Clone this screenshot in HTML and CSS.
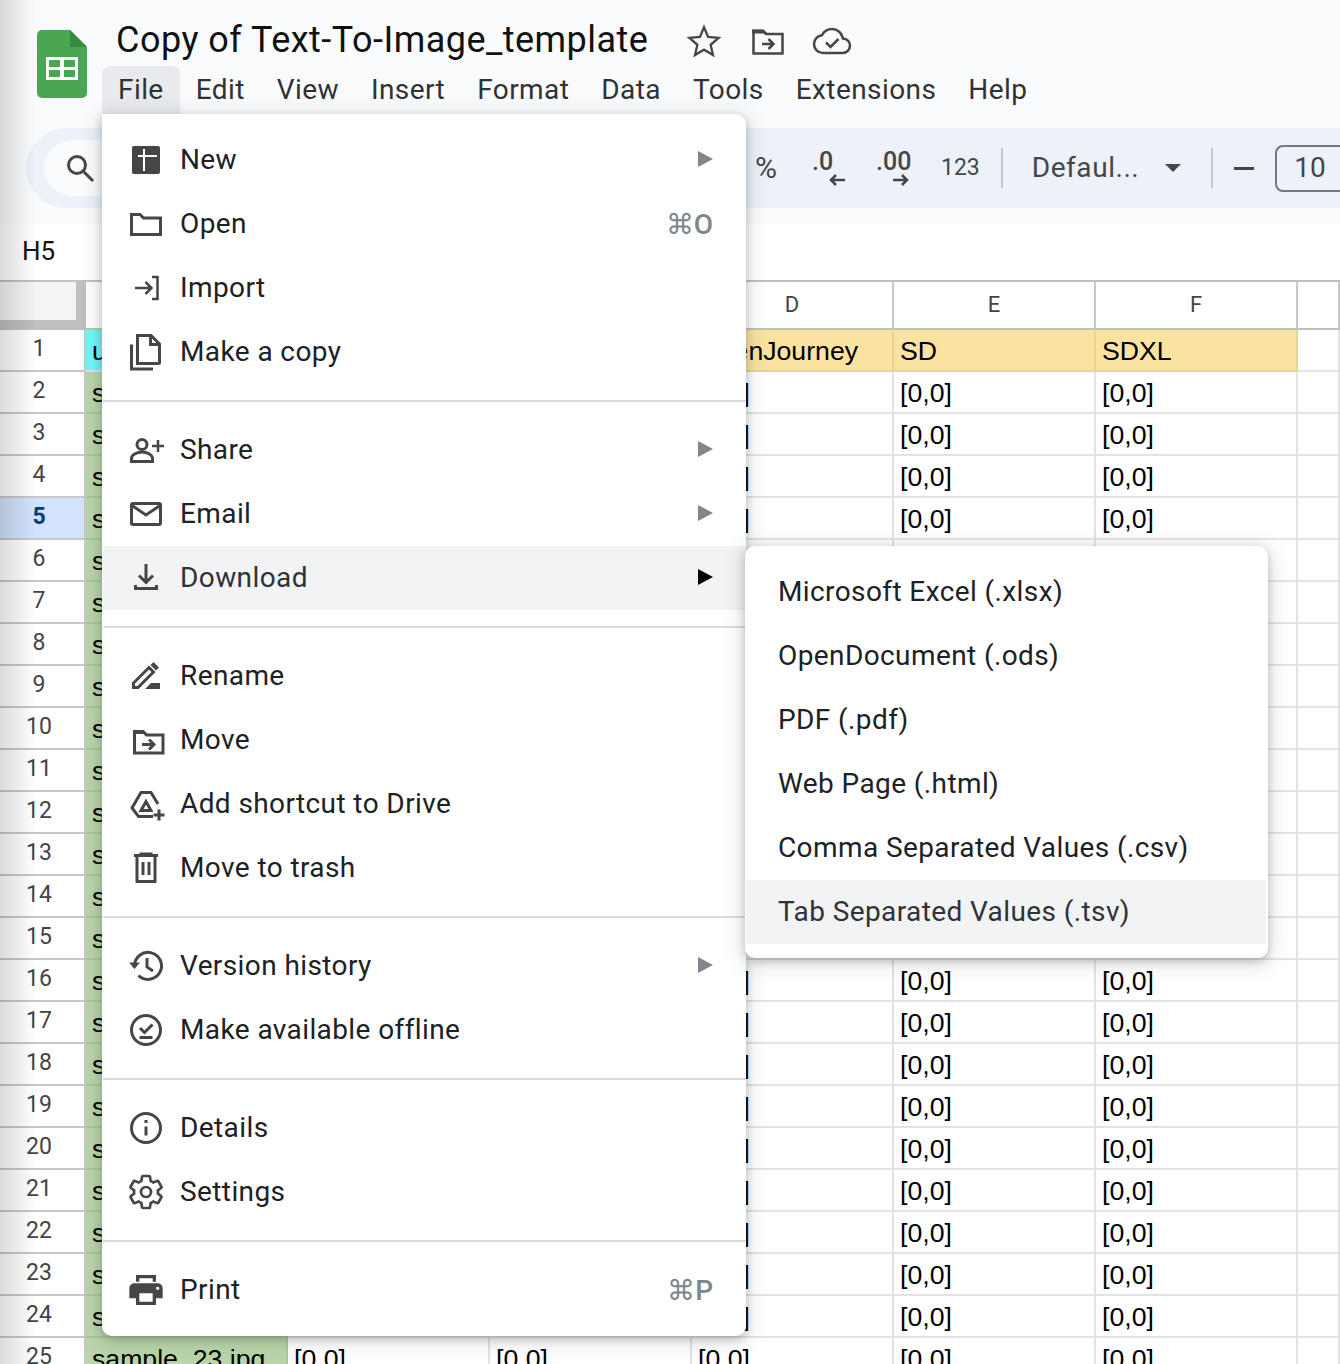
FILE: index.html
```html
<!DOCTYPE html>
<html lang="en">
<head>
    <meta charset="UTF-8">
    <meta name="viewport" content="width=device-width, initial-scale=1.0">
    <title>Copy of Text-To-Image_template</title>
    <link rel="stylesheet" href="styles.css">
</head>
<body>
    <header class="topbar">
        <svg class="logo" width="50" height="68" viewBox="0 0 50 68">
            <path d="M5 0H33L50 17V63a5 5 0 0 1-5 5H5a5 5 0 0 1-5-5V5a5 5 0 0 1 5-5z" fill="#4aa653"/>
            <path d="M33 0L50 17H33z" fill="#38883e"/>
            <path d="M9 27H41V50H9zM12 30V37H23V30zM27 30V37H38V30zM12 40V47H23V40zM27 40V47H38V40z" fill="#fff" fill-rule="evenodd"/>
        </svg>
        <div class="doc">
            <div class="title-row">
                <span class="doc-title">Copy of Text-To-Image_template</span>
                <svg class="title-icon" viewBox="0 0 40 40"><path transform="translate(1.600 1.600) scale(.92)" d="M20 5l4.400 10.600 11.500 1-8.700 7.500 2.600 11.200L20 29.400 10.200 35.300l2.600-11.200-8.700-7.500 11.500-1z"/></svg>
                <svg class="title-icon" viewBox="0 0 40 40"><path d="M5.500 10h9.500l3 3h16.500v19.500H5.500z"/><path class="solid" d="M4 8.500h11.500l4 4H4z"/><path d="M14 23h11M20.500 18l5 5-5 5"/></svg>
                <svg class="title-icon" viewBox="0 0 40 40"><path d="M31 17.500C30 12 25.500 8 20 8c-4.400 0-8.100 2.500-10 6.200C5.500 14.700 2 18.400 2 23c0 5 4 9 9 9h19.500c4.200 0 7.500-3.300 7.500-7.500 0-3.900-3.100-6.800-7-7z"/><path d="M14 21.500l4.500 4.500 8-8"/></svg>
            </div>
            <nav class="menubar">
                <a class="open">File</a>
                <a>Edit</a>
                <a>View</a>
                <a>Insert</a>
                <a>Format</a>
                <a>Data</a>
                <a>Tools</a>
                <a>Extensions</a>
                <a>Help</a>
            </nav>
        </div>
    </header>

    <div class="toolbar-wrap">
        <div class="toolbar">
            <div class="search">
                <svg width="32" height="32" viewBox="0 0 32 32"><circle cx="13" cy="13" r="8.500"/><path d="M19.500 19.500L29 29"/></svg>
            </div>
            <span class="tool percent">%</span>
            <span class="tool decimal dec-less">.0
                <svg width="18" height="12" viewBox="0 0 18 12"><path d="M17 6H3M8 1L3 6l5 5"/></svg>
            </span>
            <span class="tool decimal dec-more">.00
                <svg width="18" height="12" viewBox="0 0 18 12"><path d="M1 6h14M10 1l5 5-5 5"/></svg>
            </span>
            <span class="tool numfmt">123</span>
            <span class="tool-sep"></span>
            <span class="tool fontname">Defaul...</span>
            <span class="caret"></span>
            <span class="tool-sep sep-b"></span>
            <span class="minus"></span>
            <span class="fontsize">10</span>
        </div>
    </div>

    <div class="formula-bar">H5</div>

    <table class="grid">
        <colgroup>
            <col class="col-head"><col class="col"><col class="col"><col class="col"><col class="col"><col class="col"><col class="col"><col class="col-g">
        </colgroup>
        <thead>
            <tr><th class="corner"></th><th></th><th></th><th></th><th>D</th><th>E</th><th>F</th><th></th></tr>
        </thead>
        <tbody>
            <tr class="first"><th>1</th><td class="cyan">u</td><td class="gold"></td><td class="gold"></td><td class="gold">OpenJourney</td><td class="gold">SD</td><td class="gold">SDXL</td><td></td></tr>
            <tr><th>2</th><td class="name">s</td><td></td><td></td><td>[0,0]</td><td>[0,0]</td><td>[0,0]</td><td></td></tr>
            <tr><th>3</th><td class="name">s</td><td></td><td></td><td>[0,0]</td><td>[0,0]</td><td>[0,0]</td><td></td></tr>
            <tr><th>4</th><td class="name">s</td><td></td><td></td><td>[0,0]</td><td>[0,0]</td><td>[0,0]</td><td></td></tr>
            <tr class="current"><th>5</th><td class="name">s</td><td></td><td></td><td>[0,0]</td><td>[0,0]</td><td>[0,0]</td><td></td></tr>
            <tr><th>6</th><td class="name">s</td><td></td><td></td><td></td><td></td><td></td><td></td></tr>
            <tr><th>7</th><td class="name">s</td><td></td><td></td><td></td><td></td><td></td><td></td></tr>
            <tr><th>8</th><td class="name">s</td><td></td><td></td><td></td><td></td><td></td><td></td></tr>
            <tr><th>9</th><td class="name">s</td><td></td><td></td><td></td><td></td><td></td><td></td></tr>
            <tr><th>10</th><td class="name">s</td><td></td><td></td><td></td><td></td><td></td><td></td></tr>
            <tr><th>11</th><td class="name">s</td><td></td><td></td><td></td><td></td><td></td><td></td></tr>
            <tr><th>12</th><td class="name">s</td><td></td><td></td><td></td><td></td><td></td><td></td></tr>
            <tr><th>13</th><td class="name">s</td><td></td><td></td><td></td><td></td><td></td><td></td></tr>
            <tr><th>14</th><td class="name">s</td><td></td><td></td><td></td><td></td><td></td><td></td></tr>
            <tr><th>15</th><td class="name">s</td><td></td><td></td><td></td><td></td><td></td><td></td></tr>
            <tr><th>16</th><td class="name">s</td><td></td><td></td><td>[0,0]</td><td>[0,0]</td><td>[0,0]</td><td></td></tr>
            <tr><th>17</th><td class="name">s</td><td></td><td></td><td>[0,0]</td><td>[0,0]</td><td>[0,0]</td><td></td></tr>
            <tr><th>18</th><td class="name">s</td><td></td><td></td><td>[0,0]</td><td>[0,0]</td><td>[0,0]</td><td></td></tr>
            <tr><th>19</th><td class="name">s</td><td></td><td></td><td>[0,0]</td><td>[0,0]</td><td>[0,0]</td><td></td></tr>
            <tr><th>20</th><td class="name">s</td><td></td><td></td><td>[0,0]</td><td>[0,0]</td><td>[0,0]</td><td></td></tr>
            <tr><th>21</th><td class="name">s</td><td></td><td></td><td>[0,0]</td><td>[0,0]</td><td>[0,0]</td><td></td></tr>
            <tr><th>22</th><td class="name">s</td><td></td><td></td><td>[0,0]</td><td>[0,0]</td><td>[0,0]</td><td></td></tr>
            <tr><th>23</th><td class="name">s</td><td></td><td></td><td>[0,0]</td><td>[0,0]</td><td>[0,0]</td><td></td></tr>
            <tr><th>24</th><td class="name">s</td><td></td><td></td><td>[0,0]</td><td>[0,0]</td><td>[0,0]</td><td></td></tr>
            <tr><th>25</th><td class="name">sample_23.jpg</td><td>[0,0]</td><td>[0,0]</td><td>[0,0]</td><td>[0,0]</td><td>[0,0]</td><td></td></tr>
        </tbody>
    </table>

    <div class="edge-shade"></div>

    <!-- File menu -->
    <div class="menu file-menu">
        <div class="item">
            <svg class="ico" viewBox="0 0 40 40"><rect class="solid" x="6" y="6" width="28" height="28" rx="2"/><path class="cut" d="M18 9v22M12 16h19"/></svg>
            New<span class="arrow"></span>
        </div>
        <div class="item">
            <svg class="ico" viewBox="0 0 40 40"><path d="M5.500 10.500V30.500h29V14h-17l-3.500-3.500z"/></svg>
            Open<span class="shortcut">⌘O</span>
        </div>
        <div class="item">
            <svg class="ico" viewBox="0 0 40 40"><path class="thin" d="M9 20h16M19.500 14l6 6-6 6M26 9h5.500v22H26"/></svg>
            Import
        </div>
        <div class="item">
            <svg class="ico" viewBox="0 0 40 40"><path d="M11.500 3.500H25l8.500 8.500V30.500a1 1 0 0 1-1 1H11.500z"/><path d="M24.500 3.500V12.500H33.500M5.500 12.500V37H27"/></svg>
            Make a copy
        </div>
        <div class="sep"></div>
        <div class="item">
            <svg class="ico" viewBox="0 0 40 40"><circle cx="16" cy="14.500" r="5"/><path d="M5.500 31.500v-3c0-4 6-6.500 10.500-6.500s10.500 2.500 10.500 6.500v3z"/><path class="thin" d="M32 10v12M26 16h12"/></svg>
            Share<span class="arrow"></span>
        </div>
        <div class="item">
            <svg class="ico" viewBox="0 0 40 40"><rect x="5.500" y="9.500" width="29" height="21" rx="1.500"/><path d="M6 11.500L20 21l14-9.500"/></svg>
            Email<span class="arrow"></span>
        </div>
        <div class="item active">
            <svg class="ico" viewBox="0 0 40 40"><path d="M20 6v18M13 17.500l7 7 7-7M9.500 27v3.500h21V27"/></svg>
            Download<span class="arrow"></span>
        </div>
        <div class="sep"></div>
        <div class="item">
            <svg class="ico" viewBox="0 0 40 40"><path d="M7.500 31.500V27L23 11.500l4.500 4.500L12 31.500z"/><path class="solid" d="M24.500 9l3-3 5.500 5.500-3 3zM19 33l6-6h9v6z"/></svg>
            Rename
        </div>
        <div class="item">
            <svg class="ico" viewBox="0 0 40 40"><path d="M8.500 12h9l3 3h16.500v18H8.500z"/><path class="solid" d="M7 10h10.500l4 4H7z"/><path d="M16 24.500h12M23 19.500l5 5-5 5"/></svg>
            Move
        </div>
        <div class="item">
            <svg class="ico" viewBox="0 0 40 40"><path d="M27 32.500H12.500L6 24 15 8.500H25L32 20"/><path d="M15 26.500L20 17.500l5 9z"/><path d="M33 25.500v11M27.500 31h11"/></svg>
            Add shortcut to Drive
        </div>
        <div class="item">
            <svg class="ico" viewBox="0 0 40 40"><path d="M8 7.500h24M15 7.500V6h10v1.500M11 8v25.500h18V8M17 14v13M23 14v13"/></svg>
            Move to trash
        </div>
        <div class="sep"></div>
        <div class="item">
            <svg class="ico" viewBox="0 0 40 40"><path d="M8.500 20a13.500 13.500 0 1 1 4 9.500M21 12v9l6 4"/><path class="solid" d="M3 16.500h11L8.500 23z"/></svg>
            Version history<span class="arrow"></span>
        </div>
        <div class="item">
            <svg class="ico" viewBox="0 0 40 40"><circle cx="20" cy="20" r="14.500"/><path d="M14 18l4.500 4.500 8-8M13.500 27.500h13"/></svg>
            Make available offline
        </div>
        <div class="sep"></div>
        <div class="item">
            <svg class="ico" viewBox="0 0 40 40"><circle cx="20" cy="20" r="14.500"/><path d="M20 18.500v9M20 12v3"/></svg>
            Details
        </div>
        <div class="item">
            <svg class="ico" viewBox="0 0 24 24"><path class="gear" d="M19.140 12.940c.04-.3.060-.61.060-.94 0-.32-.02-.64-.07-.94l2.030-1.580c.18-.14.23-.41.12-.61l-1.920-3.320c-.12-.22-.37-.29-.59-.22l-2.390.96c-.5-.38-1.030-.7-1.620-.94l-.36-2.540c-.04-.24-.24-.41-.48-.41h-3.840c-.24 0-.43.17-.47.41l-.36 2.540c-.59.24-1.130.57-1.620.94l-2.390-.96c-.22-.08-.47 0-.59.22L2.740 8.870c-.12.21-.08.47.12.61l2.030 1.580c-.05.3-.09.63-.09.94s.02.64.07.94l-2.030 1.580c-.18.14-.23.41-.12.61l1.920 3.320c.12.22.37.29.59.22l2.390-.96c.5.38 1.030.7 1.620.94l.36 2.540c.05.24.24.41.48.41h3.840c.24 0 .44-.17.47-.41l.36-2.540c.59-.24 1.130-.56 1.620-.94l2.390.96c.22.08.47 0 .59-.22l1.920-3.320c.12-.22.07-.47-.12-.61l-2.010-1.580z"/><circle class="gear" cx="12" cy="12" r="3"/></svg>
            Settings
        </div>
        <div class="sep"></div>
        <div class="item">
            <svg class="ico" viewBox="0 0 24 24"><path class="solid" fill-rule="evenodd" d="M19 8H5c-1.660 0-3 1.340-3 3v6h4v4h12v-4h4v-6c0-1.660-1.340-3-3-3zm-3 11H8v-5h8v5zm3-7c-.55 0-1-.45-1-1s.45-1 1-1 1 .45 1 1-.45 1-1 1zM18 3H6v4h2V5h8v2h2z"/></svg>
            Print<span class="shortcut">⌘P</span>
        </div>
    </div>

    <!-- Download submenu -->
    <div class="menu sub-menu">
        <div class="item">Microsoft Excel (.xlsx)</div>
        <div class="item">OpenDocument (.ods)</div>
        <div class="item">PDF (.pdf)</div>
        <div class="item">Web Page (.html)</div>
        <div class="item">Comma Separated Values (.csv)</div>
        <div class="item active">Tab Separated Values (.tsv)</div>
    </div>
</body>
</html>
```

FILE: styles.css
```css
/* General Styles */
html, body {
    height: 100%;
    margin: 0;
    overflow: hidden;
}

body {
    font-family: Roboto, "Liberation Sans", sans-serif;
    color: #202124;
    background-color: #fff;
}

/* Header */
.topbar {
    display: flex;
    height: 128px;
    box-sizing: border-box;
    background-color: #f9fbfd;
}

.logo {
    margin: 30px 15px 0 37px;
}

.doc {
    display: flex;
    flex-direction: column;
}

.title-row {
    display: flex;
    align-items: center;
    height: 50px;
    margin-top: 16px;
    padding-left: 14px;
}

.doc-title {
    width: 534px;
    font-size: 36px;
    line-height: 46px;
    margin-bottom: 2px;
    letter-spacing: 0.47px;
    white-space: nowrap;
    color: #111;
    margin-right: 34px;
}

.title-icon {
    width: 40px;
    height: 40px;
    margin-right: 24px;
    fill: none;
    stroke: #444746;
    stroke-width: 2.500;
}

.title-icon .solid {
    fill: #444746;
    stroke: none;
}

.menubar {
    display: flex;
    height: 48px;
}

.menubar a {
    padding: 0 16px;
    font-size: 28px;
    letter-spacing: 0.42px;
    line-height: 48px;
    border-radius: 8px 8px 0 0;
    color: #303236;
}

.menubar a.open {
    background-color: #e8eaee;
}

/* Toolbar */
.toolbar-wrap {
    height: 80px;
    padding-left: 26px;
    background-color: #f9fbfd;
}

.toolbar {
    display: flex;
    align-items: center;
    height: 80px;
    background-color: #edf2fa;
    border-radius: 40px 0 0 40px;
    color: #444746;
    overflow: hidden;
}

.search {
    flex: none;
    width: 700px;
    height: 56px;
    margin-left: 18px;
    border-radius: 28px;
    background-color: #f9fbfd;
    box-sizing: border-box;
    padding: 12px 0 0 20px;
}

.search svg {
    fill: none;
    stroke: #444746;
    stroke-width: 3;
}

.tool {
    flex: none;
    font-size: 26px;
    margin-bottom: 2px;
}

.percent {
    margin-left: 11px;
    font-size: 30px;
}

.decimal {
    display: flex;
    flex-direction: column;
    align-items: flex-start;
    font-size: 25px;
    font-weight: 500;
    line-height: 24px;
    height: 50px;
    margin-top: 14px;
    margin-bottom: 0;
}

.decimal svg {
    align-self: flex-end;
    fill: none;
    stroke: #444746;
    stroke-width: 2.500;
}

.dec-less {
    margin-left: 35px;
    width: 34px;
}

.dec-more {
    margin-left: 30px;
    width: 34px;
}

.numfmt {
    margin-left: 31px;
    font-size: 23px;
}

.tool-sep {
    flex: none;
    width: 2px;
    height: 40px;
    margin-left: 21px;
    background-color: #c7c7c7;
}

.fontname {
    margin-left: 29px;
    font-size: 28px;
    letter-spacing: 0.55px;
}

.caret {
    flex: none;
    margin-left: 26px;
    border-left: 8px solid transparent;
    border-right: 8px solid transparent;
    border-top: 8px solid #444746;
}

.sep-b {
    margin-left: 30px;
}

.minus {
    flex: none;
    width: 20px;
    height: 3px;
    margin-left: 21px;
    background-color: #444746;
}

.fontsize {
    flex: none;
    width: 90px;
    height: 47px;
    margin-left: 21px;
    box-sizing: border-box;
    border: 2px solid #747775;
    border-radius: 8px;
    font-size: 28px;
    line-height: 41px;
    padding-left: 17px;
}

/* Formula bar */
.formula-bar {
    height: 56px;
    border-top: 16px solid #f9fbfd;
    padding-left: 22px;
    font-size: 26px;
    line-height: 54px;
    background-color: #fff;
    color: #111;
}

/* Sheet */
.grid {
    border-collapse: separate;
    border-spacing: 0;
    table-layout: fixed;
    width: 1340px;
    font-family: "Liberation Sans", Arial, sans-serif;
    font-size: 26.670px;
    color: #000;
}

.col-head { width: 86px; }
.col { width: 202px; }
.col-g { width: 42px; }

.grid thead th {
    height: 50px;
    box-sizing: border-box;
    border-top: 2px solid #c0c0c0;
    border-bottom: 2px solid #c0c0c0;
    border-right: 2px solid #c8c8c8;
    font-family: Roboto, sans-serif;
    font-size: 22px;
    font-weight: 400;
    color: #444;
    padding: 0 0 2px;
}

.grid thead th.corner {
    border-right: 10px solid #c0c0c0;
    border-bottom: 10px solid #c0c0c0;
    background-color: #f3f4f5;
}

.grid tbody th {
    height: 42px;
    box-sizing: border-box;
    border-bottom: 2px solid #c8c8c8;
    border-right: 2px solid #c8c8c8;
    font-family: Roboto, sans-serif;
    font-size: 23px;
    font-weight: 400;
    color: #444;
    padding: 0 6px 4px 0;
    text-align: center;
}

.grid td {
    height: 42px;
    box-sizing: border-box;
    border-bottom: 2px solid #e2e3e3;
    border-right: 2px solid #e2e3e3;
    padding: 2px 6px 0;
    white-space: nowrap;
    overflow: hidden;
}

.grid .gold {
    background-color: #fae3a0;
    border-right-color: #e8d592;
    border-bottom-color: #e8d592;
}

.grid .cyan {
    background-color: #6ff7fb;
}

.grid .name {
    background-color: #b9d6aa;
    border-color: #a9c79b;
}

.grid .current th {
    background-color: #d3e3fd;
    color: #0b3a7a;
    font-weight: 700;
}

/* Shade down the left edge of the window */
.edge-shade {
    position: absolute;
    left: 0;
    top: 0;
    bottom: 0;
    width: 36px;
    background: linear-gradient(to right, rgba(0, 0, 0, 0.14), rgba(0, 0, 0, 0));
}

/* Menus */
.menu {
    position: absolute;
    box-sizing: border-box;
    padding: 14px 0;
    background-color: #fff;
    border-radius: 0 10px 10px 10px;
    box-shadow: 0 3px 8px rgba(60, 64, 67, 0.28), 0 4px 20px 4px rgba(60, 64, 67, 0.14);
    font-size: 28px;
    letter-spacing: 0.4px;
}

.file-menu {
    left: 102px;
    top: 114px;
    width: 644px;
    padding-left: 1px;
}

.sub-menu {
    left: 745px;
    top: 546px;
    width: 523px;
    padding-left: 1px;
    padding-right: 2px;
    border-radius: 10px;
}

.item {
    display: flex;
    align-items: center;
    height: 64px;
    box-sizing: border-box;
    padding-right: 33px;
    padding-bottom: 2px;
}

.file-menu .item {
    padding-left: 23px;
}

.sub-menu .item {
    padding-left: 32px;
}

.item.active {
    background-color: #f1f3f4;
    color: #303236;
}

.sep {
    height: 2px;
    margin: 16px 0;
    background-color: #dadce0;
}

.ico {
    flex: none;
    width: 40px;
    height: 40px;
    margin-top: 2px;
    margin-right: 14px;
    fill: none;
    stroke: #444746;
    stroke-width: 3;
}

.ico .solid {
    fill: #444746;
    stroke: none;
}

.ico .cut {
    stroke: #fff;
    stroke-width: 2;
}

.ico .thin {
    stroke-width: 2.500;
}

.ico .gear {
    stroke-width: 1.600;
}

.arrow {
    margin-left: auto;
    border-left: 15px solid #80868b;
    border-top: 8px solid transparent;
    border-bottom: 8px solid transparent;
}

.active .arrow {
    border-left-color: #000;
}

.shortcut {
    margin-left: auto;
    margin-top: 2px;
    font-weight: 500;
    letter-spacing: 0;
    color: #80868b;
}
```
